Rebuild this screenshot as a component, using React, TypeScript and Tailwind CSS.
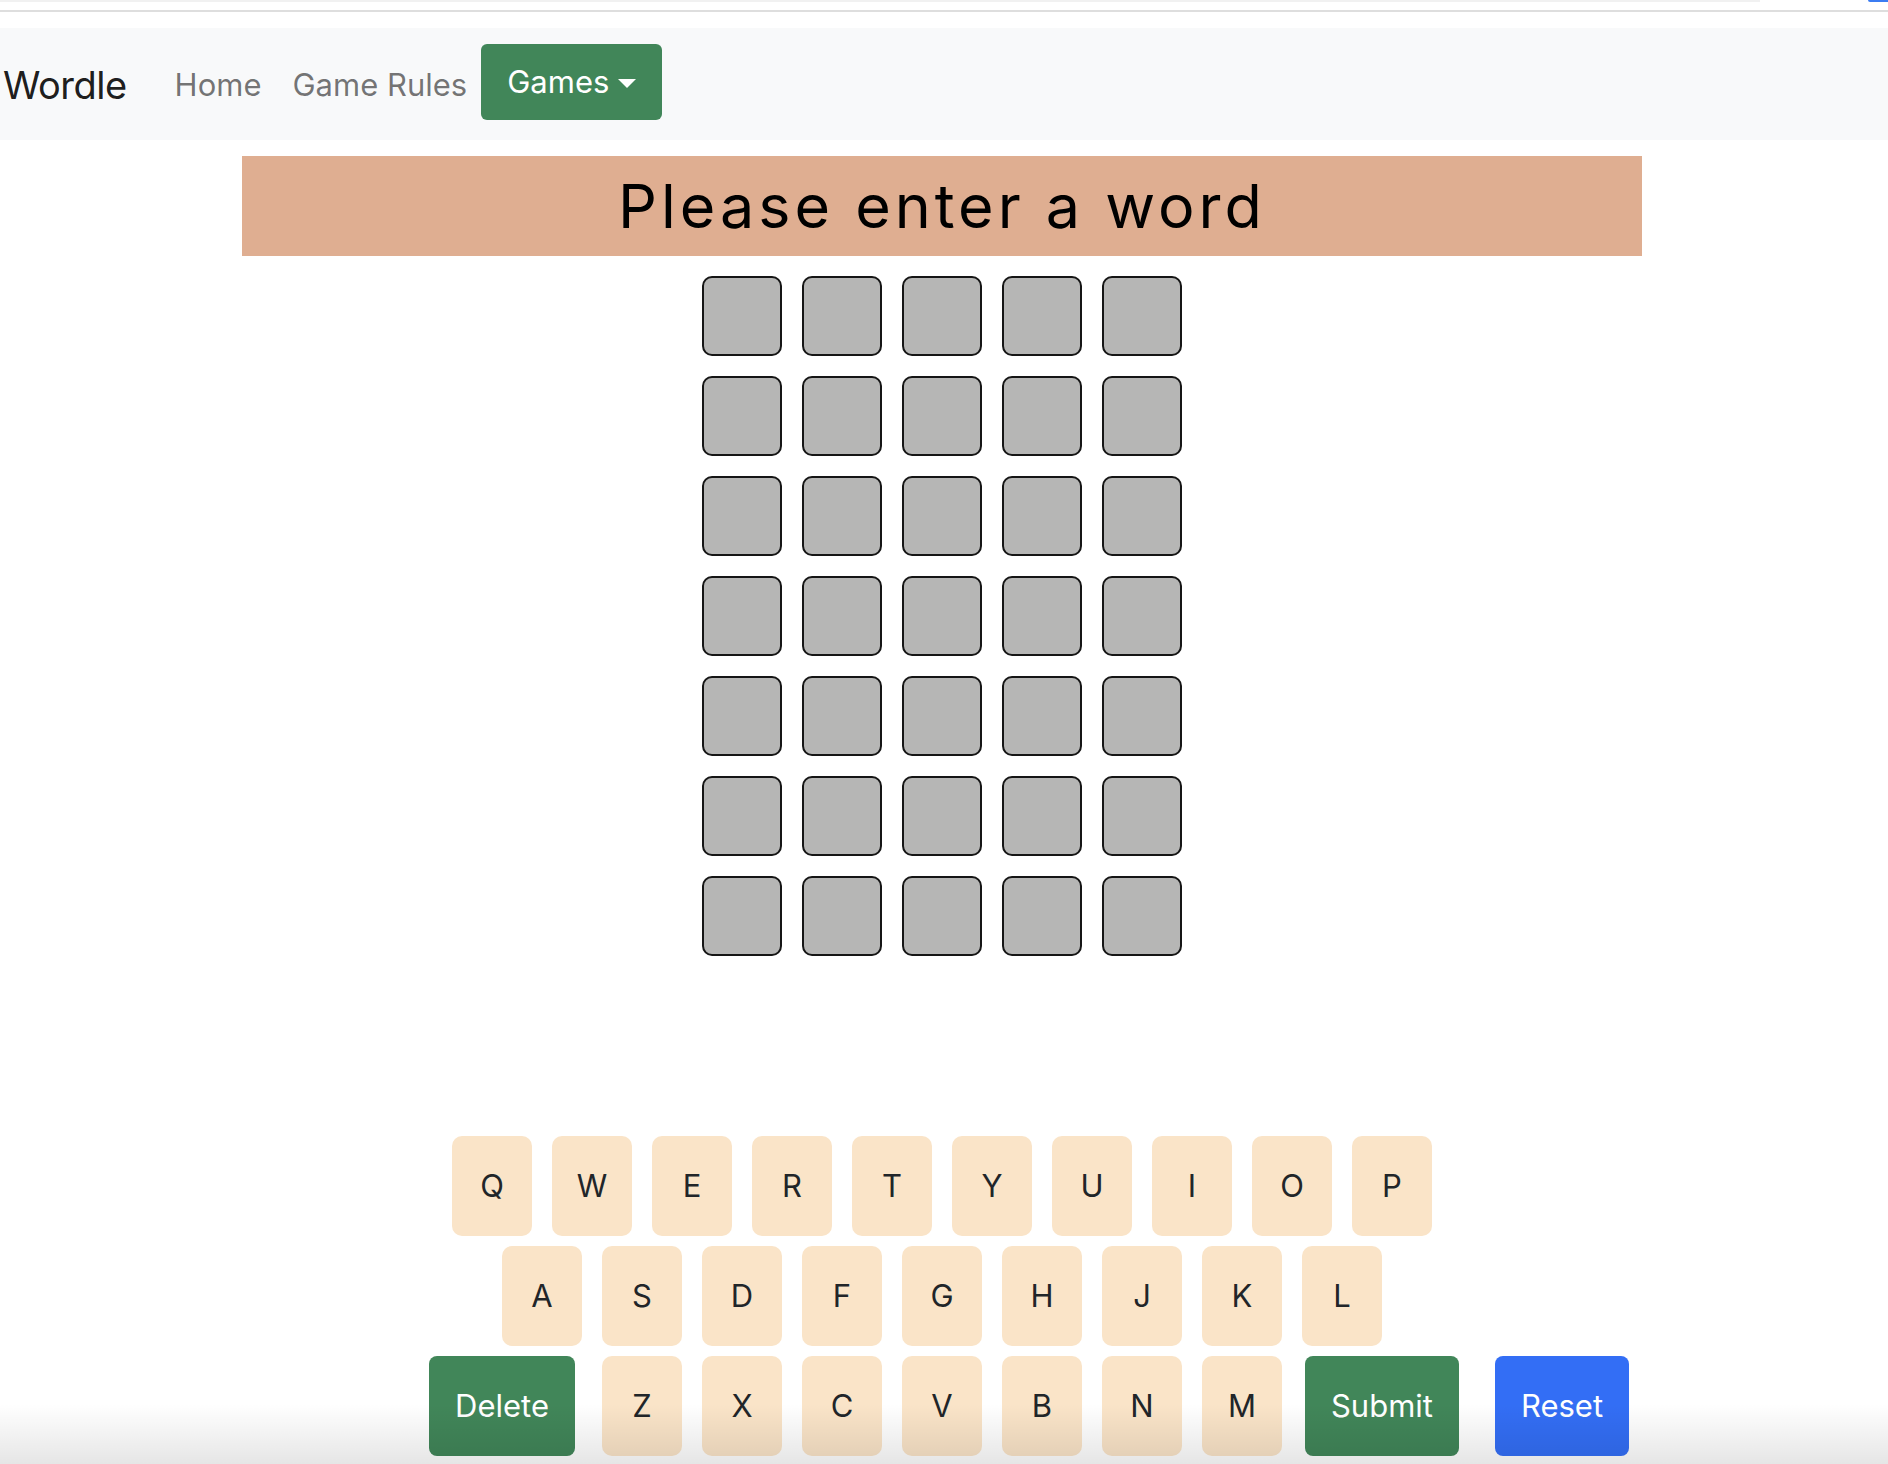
import React from "react";

const ROW1 = ["Q", "W", "E", "R", "T", "Y", "U", "I", "O", "P"];
const ROW2 = ["A", "S", "D", "F", "G", "H", "J", "K", "L"];
const ROW3 = ["Z", "X", "C", "V", "B", "N", "M"];
const ROWS = 7;
const COLS = 5;

const Key: React.FC<{ letter: string }> = ({ letter }) => (
  <button className="w-[80px] h-[100px] rounded-[10px] bg-[#fae4c8] text-[31px] text-[#212529] flex items-center justify-center">
    {letter}
  </button>
);

const App: React.FC = () => {
  return (
    <div className="relative min-h-[1464px] bg-white font-['Inter','Noto_Sans',sans-serif] overflow-hidden">
      {/* browser leftovers on top */}
      <div className="flex h-[2px]">
        <div className="w-[1760px] bg-[#f1f1f1]" />
        <div className="ml-auto w-[20px] bg-[#3b7cf2] rounded-bl-[2px]" />
      </div>
      <div className="mt-[8px] h-[2px] bg-[#dedede]" />
      <div className="h-[16px]" />

      {/* navbar */}
      <nav className="h-[112px] bg-[#f8f9fa] flex items-center pl-[3px]">
        <span className="mt-[3px] text-[38px] text-black/90 tracking-[-0.5px]">Wordle</span>
        <a className="ml-[48px] mt-[3px] text-[31px] text-black/55">Home</a>
        <a className="ml-[31px] mt-[3px] text-[31px] text-black/55">Game Rules</a>
        <button className="ml-[14px] -mt-[4px] h-[76px] px-[26px] rounded-[6px] bg-[#418659] text-white text-[31px] flex items-center">
          Games
          <span className="ml-[9px] mt-[2px] w-0 h-0 border-l-[9px] border-r-[9px] border-t-[9px] border-l-transparent border-r-transparent border-t-white" />
        </button>
      </nav>

      {/* message + board, a touch left of the page centre like the original */}
      <div className="pr-[4px]">
        <div className="mt-[16px] mx-auto w-[1400px] h-[100px] bg-[#dfae91] flex items-center justify-center">
          <h1 className="text-[61px] tracking-[4px] text-black leading-none">Please enter a word</h1>
        </div>

        <div className="mt-[20px] mx-auto w-max grid grid-cols-5 gap-[20px]">
          {Array.from({ length: ROWS * COLS }).map((_, i) => (
            <div key={i} className="w-[80px] h-[80px] rounded-[10px] border-2 border-[#151515] bg-[#b6b6b5]" />
          ))}
        </div>
      </div>

      {/* keyboard */}
      <div className="mt-[180px]">
        <div className="pr-[4px] flex justify-center gap-[20px]">
          {ROW1.map((l) => (
            <Key key={l} letter={l} />
          ))}
        </div>
        <div className="pr-[4px] mt-[10px] flex justify-center gap-[20px]">
          {ROW2.map((l) => (
            <Key key={l} letter={l} />
          ))}
        </div>
        <div className="mt-[10px] grid grid-cols-[1fr_auto_1fr]">
          <div />
          <div className="flex">
            <button className="w-[146px] h-[100px] rounded-[8px] bg-[#418659] text-white text-[31px] mr-[27px]">
              Delete
            </button>
            <div className="flex gap-[20px]">
              {ROW3.map((l) => (
                <Key key={l} letter={l} />
              ))}
            </div>
            <button className="w-[154px] h-[100px] rounded-[8px] bg-[#418659] text-white text-[31px] ml-[23px]">
              Submit
            </button>
          </div>
          <div>
            <button className="ml-[36px] w-[134px] h-[100px] rounded-[8px] bg-[#336ef5] text-white text-[31px]">
              Reset
            </button>
          </div>
        </div>
      </div>

      {/* bottom shade from the screenshot */}
      <div className="pointer-events-none absolute left-0 right-0 bottom-0 h-[60px] bg-linear-to-b from-transparent to-black/10" />
    </div>
  );
};

export default App;
